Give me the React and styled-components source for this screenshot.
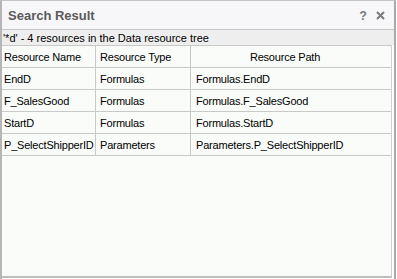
import React from "react";
import styled, { createGlobalStyle } from "styled-components";

const Global = createGlobalStyle`
  html, body { margin: 0; padding: 0; background: #ffffff; }
  body { font-family: "Liberation Sans", Arial, sans-serif; }
`;

const Window = styled.div`
  box-sizing: border-box;
  width: 396px;
  height: 279px;
  display: flex;
  flex-direction: column;
  border-top: 1px solid #c4c4c4;
  border-left: 2px solid #b6b6b6;
  border-right: 2px solid #a9a9a9;
  background: #ffffff;
`;

const TitleBar = styled.div`
  box-sizing: border-box;
  height: 29px;
  flex: none;
  display: flex;
  align-items: center;
  padding: 1px 8px 0 6px;
  background: #f7f7fa;
  border-bottom: 1px solid #c8c8c8;
`;

const Title = styled.div`
  flex: 1;
  font-size: 13px;
  font-weight: bold;
  color: #5a5a5a;
`;

const ToolButton = styled.div`
  width: 12px;
  height: 14px;
  display: flex;
  align-items: center;
  justify-content: center;
  margin-left: ${(p) => p.$gap || 0}px;
  color: #7a7a7a;
  font-size: 12.5px;
  font-weight: bold;
`;

const InfoBar = styled.div`
  box-sizing: border-box;
  height: 15px;
  flex: none;
  display: flex;
  align-items: center;
  padding-left: 1px;
  background: #eeeeee;
  font-size: 11px;
  color: #000000;
`;

const GridArea = styled.div`
  flex: 1;
  margin: 0 2px 1px 0;
  background: #fafcfa;
  border-right: 1px solid #cfcfcf;
  border-bottom: 2px solid #bdbdbd;
`;

const Table = styled.div`
  display: grid;
  grid-template-columns: 94px 95px 1fr;
  border-top: 1px solid #c9c9c9;
`;

const Cell = styled.div`
  box-sizing: border-box;
  height: 22px;
  display: flex;
  align-items: center;
  justify-content: ${(p) => (p.$center ? "center" : "flex-start")};
  padding: 1px ${(p) => (p.$center ? 12 : 0)}px 0 ${(p) => p.$pad}px;
  border-bottom: 1px solid #c9c9c9;
  border-right: ${(p) => (p.$last ? "none" : "1px solid #c9c9c9")};
  font-size: 11px;
  letter-spacing: -0.2px;
  color: #000000;
  white-space: nowrap;
  overflow: hidden;
`;

const rows = [
  ["EndD", "Formulas", "Formulas.EndD"],
  ["F_SalesGood", "Formulas", "Formulas.F_SalesGood"],
  ["StartD", "Formulas", "Formulas.StartD"],
  ["P_SelectShipperID", "Parameters", "Parameters.P_SelectShipperID"],
];

const CloseIcon = () => (
  <svg width="9" height="9" viewBox="0 0 9 9">
    <path d="M1 1 L8 8 M8 1 L1 8" stroke="#7a7a7a" strokeWidth="2" />
  </svg>
);

export default function App() {
  return (
    <>
      <Global />
      <Window>
        <TitleBar>
          <Title>Search Result</Title>
          <ToolButton>?</ToolButton>
          <ToolButton $gap={5}>
            <CloseIcon />
          </ToolButton>
        </TitleBar>
        <InfoBar>'*d' - 4 resources in the Data resource tree</InfoBar>
        <GridArea>
          <Table>
            <Cell $pad={2}>Resource Name</Cell>
            <Cell $pad={4}>Resource Type</Cell>
            <Cell $pad={0} $center $last>
              Resource Path
            </Cell>
            {rows.map((r) => (
              <React.Fragment key={r[0]}>
                <Cell $pad={2}>{r[0]}</Cell>
                <Cell $pad={4}>{r[1]}</Cell>
                <Cell $pad={5} $last>
                  {r[2]}
                </Cell>
              </React.Fragment>
            ))}
          </Table>
        </GridArea>
      </Window>
    </>
  );
}
